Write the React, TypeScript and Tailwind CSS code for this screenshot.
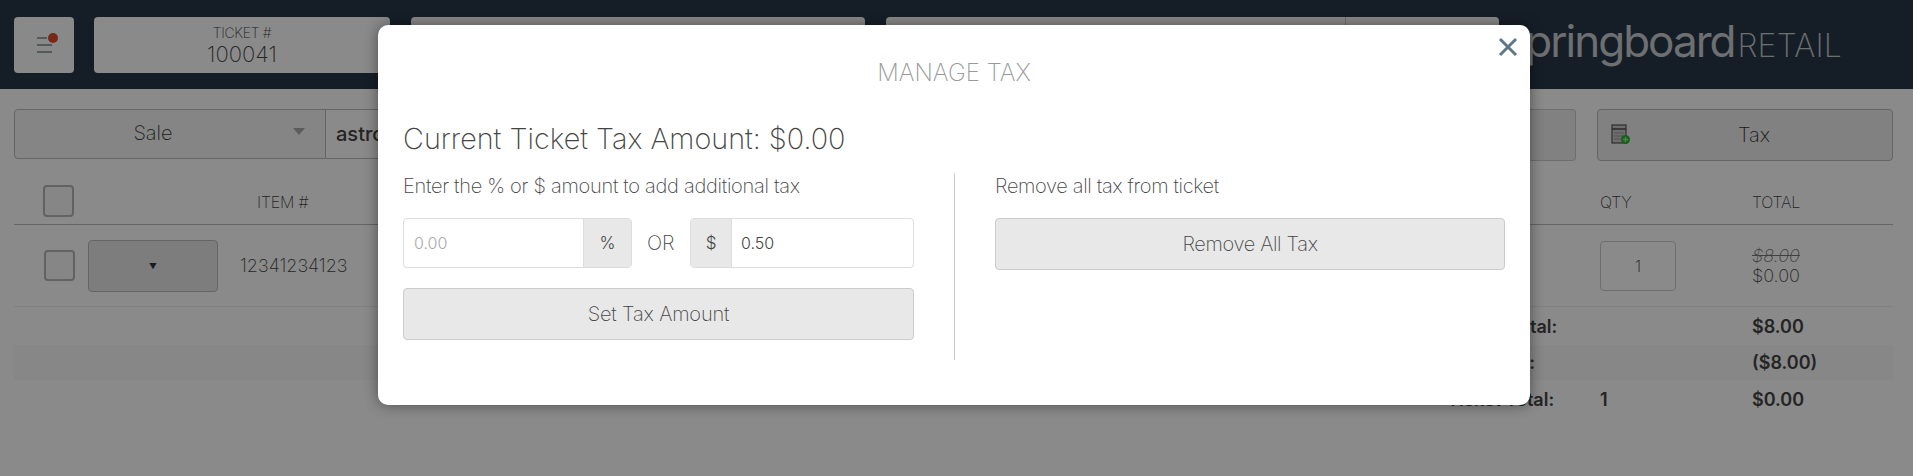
import React from "react";

const font = { fontFamily: '"Inter", "Liberation Sans", sans-serif' };

function Hamburger() {
  return (
    <svg width="24" height="24" viewBox="0 0 24 24" className="block overflow-visible">
      <path d="M5 5h10M5 12h15M5 19h15" stroke="#3b4a55" strokeWidth="1.2" fill="none" />
      <circle cx="21" cy="5" r="5" fill="#e0492c" />
    </svg>
  );
}

function TaxIcon() {
  return (
    <svg width="20" height="22" viewBox="0 0 20 22" className="block">
      <rect x="1" y="1" width="14" height="18" fill="#c9c9c9" stroke="#555" strokeWidth="1.2" />
      <path d="M1 5h14" stroke="#555" strokeWidth="1.6" />
      <path d="M3 9h10M3 12h10M3 15h10" stroke="#999" strokeWidth="1" />
      <circle cx="14.5" cy="15.5" r="4.5" fill="#2fb52f" />
      <path d="M14.5 13v5M12 15.5h5" stroke="#8df08d" strokeWidth="1.4" />
    </svg>
  );
}

function Check({ big }: { big?: boolean }) {
  return <div className={`w-[31px] ${big ? "h-[32px]" : "h-[31px]"} rounded-[4px] border-2 border-[#b5b5b5] bg-[#f8f8f8]`} />;
}

function Page() {
  return (
    <div className="w-[1913px] h-[476px] bg-white text-[#444] font-extralight overflow-hidden">
      <header className="h-[89px] bg-[#273849] flex items-center pl-[14px] pr-[71px]">
        <button className="w-[60px] h-[56px] shrink-0 rounded-[4px] bg-[#fefefe] flex items-center justify-center">
          <Hamburger />
        </button>
        <div className="ml-[20px] w-[296px] h-[56px] shrink-0 rounded-[4px] bg-white flex flex-col items-center justify-center">
          <span className="text-[14px] leading-[18px] tracking-[-0.3px] text-[#444]">TICKET #</span>
          <span className="text-[22px] leading-[24px] text-[#444]">100041</span>
        </div>
        <div className="ml-[21px] w-[454px] h-[56px] shrink-0 rounded-[4px] bg-white" />
        <div className="ml-[21px] w-[613px] h-[56px] shrink-0 rounded-[4px] bg-white flex">
          <div className="w-[460px] border-r border-[#ccc]" />
        </div>
        <div className="ml-auto flex items-baseline whitespace-nowrap -mt-[2px]">
          <span className="text-[44px] leading-[60px] font-normal tracking-[-2px] text-white/75">springboard</span>
          <span className="text-[32px] leading-[60px] font-extralight tracking-[0.2px] text-white/75 ml-[3px]">RETAIL</span>
        </div>
      </header>

      <div className="pl-[14px] pt-[20px] flex items-start">
        <div className="w-[312px] h-[50px] shrink-0 rounded-l-[4px] border border-[#bbb] bg-[#f6f6f6] flex items-center pb-[2px] relative">
          <span className="flex-1 text-center text-[20px] pr-[34px] text-[#333]">Sale</span>
          <span className="absolute right-[20px] top-[18px] w-0 h-0 border-x-[6px] border-x-transparent border-t-[7px] border-t-[#aaa]" />
        </div>
        <div className="w-[300px] h-[50px] shrink-0 border border-l-0 border-[#bbb] flex items-center pl-[10px] text-[20px] font-medium text-[#444]">astro</div>
        <div className="w-[950px] h-[52px] shrink-0 border border-l-0 border-[#ccc] rounded-r-[4px] bg-[#eee]" />
        <div className="ml-[21px] w-[296px] h-[52px] shrink-0 rounded-[4px] border border-[#bbb] bg-[#eee] flex items-center pl-[13px] pr-[15px]">
          <TaxIcon />
          <span className="flex-1 text-center text-[20px] text-[#333]">Tax</span>
        </div>
      </div>

      <div className="ml-[14px] mt-[24px] w-[1879px]">
        <div className="h-[40px] border-b border-[#bbb] flex items-start text-[16px] text-[#444]">
          <div className="ml-[29px] shrink-0"><Check big /></div>
          <span className="ml-[183px] mt-[5px] shrink-0 w-[1343px] tracking-[-0.2px]">ITEM #</span>
          <span className="mt-[5px] w-[152px] shrink-0 tracking-[-0.2px]">QTY</span>
          <span className="mt-[5px] shrink-0 tracking-[-0.2px]">TOTAL</span>
        </div>
        <div className="h-[82px] border-b border-[#eee] flex items-center">
          <div className="ml-[30px] shrink-0"><Check /></div>
          <button className="ml-[13px] w-[130px] h-[52px] shrink-0 rounded-[4px] border border-[#bbb] bg-[#e8e8e8] text-[8px] text-[#333]">▼</button>
          <span className="ml-[22px] w-[1360px] shrink-0 text-[18px] text-[#444]">12341234123</span>
          <div className="w-[76px] h-[50px] shrink-0 rounded-[4px] border border-[#ccc] flex items-center justify-center text-[16px] text-[#333]">1</div>
          <div className="ml-[76px] shrink-0 flex flex-col text-[18px] leading-[20px]">
            <span className="italic line-through text-[#777]">$8.00</span>
            <span className="text-[#444]">$0.00</span>
          </div>
        </div>
        <div className="h-[38px] flex items-center text-[18px] font-semibold text-[#444]">
          <span className="ml-[1456px] w-[282px] shrink-0">Sub Total:</span>
          <span>$8.00</span>
        </div>
        <div className="h-[35px] bg-[#f9f9f9] flex items-center text-[18px] font-semibold text-[#444]">
          <span className="ml-[1428px] w-[310px] shrink-0">Discounts:</span>
          <span>($8.00)</span>
        </div>
        <div className="h-[39px] flex items-center text-[18px] font-semibold text-[#444]">
          <span className="ml-[1433px] w-[153px] shrink-0">Ticket Total:</span>
          <span className="w-[152px] shrink-0">1</span>
          <span>$0.00</span>
        </div>
      </div>
    </div>
  );
}

function Modal() {
  return (
    <div className="absolute left-[378px] top-[25px] w-[1152px] h-[380px] rounded-[10px] bg-white shadow-[0_0_14px_rgba(0,0,0,0.45)] px-[25px] pt-[30px] font-extralight text-[#444]">
      <button className="absolute right-[10px] top-[10px] w-[24px] h-[24px] text-[#5f7787]">
        <svg viewBox="0 0 24 24" width="24" height="24" className="block">
          <path d="M4 4l16 16M20 4L4 20" stroke="currentColor" strokeWidth="3" fill="none" />
        </svg>
      </button>
      <h2 className="text-center text-[24px] leading-[36px] font-extralight text-[#999]">MANAGE TAX</h2>
      <h3 className="mt-[30px] text-[28.8px] leading-[36px] font-extralight text-[#444]">Current Ticket Tax Amount: $0.00</h3>
      <div className="mt-[16px] flex">
        <div className="w-[511px]">
          <p className="mt-[1px] text-[20px] leading-[24px] tracking-[-0.28px] text-[#444]">Enter the % or $ amount to add additional tax</p>
          <div className="mt-[20px] flex items-center">
            <div className="w-[229px] h-[50px] rounded-[4px] border border-[#ddd] flex overflow-hidden">
              <span className="flex-1 pl-[10px] text-[16px] font-light leading-[48px] text-[#aaa]">0.00</span>
              <span className="w-[48px] bg-[#e8e8e8] border-l border-[#ddd] text-center text-[17px] font-light leading-[48px]">%</span>
            </div>
            <span className="ml-[15px] text-[20px] text-[#444]">OR</span>
            <div className="ml-auto w-[224px] h-[50px] rounded-[4px] border border-[#ddd] flex overflow-hidden">
              <span className="w-[41px] bg-[#e8e8e8] border-r border-[#ddd] text-center text-[17px] font-light leading-[48px]">$</span>
              <span className="flex-1 pl-[9px] text-[16px] font-light leading-[48px] text-[#444]">0.50</span>
            </div>
          </div>
          <button className="mt-[20px] w-full h-[52px] rounded-[4px] border border-[#ccc] bg-[#e8e8e8] text-[20px] tracking-[-0.15px] text-[#444]">Set Tax Amount</button>
        </div>
        <div className="ml-[40px] w-px h-[187px] bg-[#ccc]" />
        <div className="ml-[40px] w-[510px]">
          <p className="mt-[1px] text-[20px] leading-[24px] tracking-[-0.35px] text-[#444]">Remove all tax from ticket</p>
          <button className="mt-[20px] w-full h-[52px] rounded-[4px] border border-[#ccc] bg-[#e8e8e8] text-[20px] tracking-[-0.35px] text-[#444]">Remove All Tax</button>
        </div>
      </div>
    </div>
  );
}

export default function App() {
  return (
    <div className="relative w-[1913px] h-[476px] overflow-hidden" style={font}>
      <Page />
      <div className="absolute inset-0 bg-black/46" />
      <Modal />
    </div>
  );
}
